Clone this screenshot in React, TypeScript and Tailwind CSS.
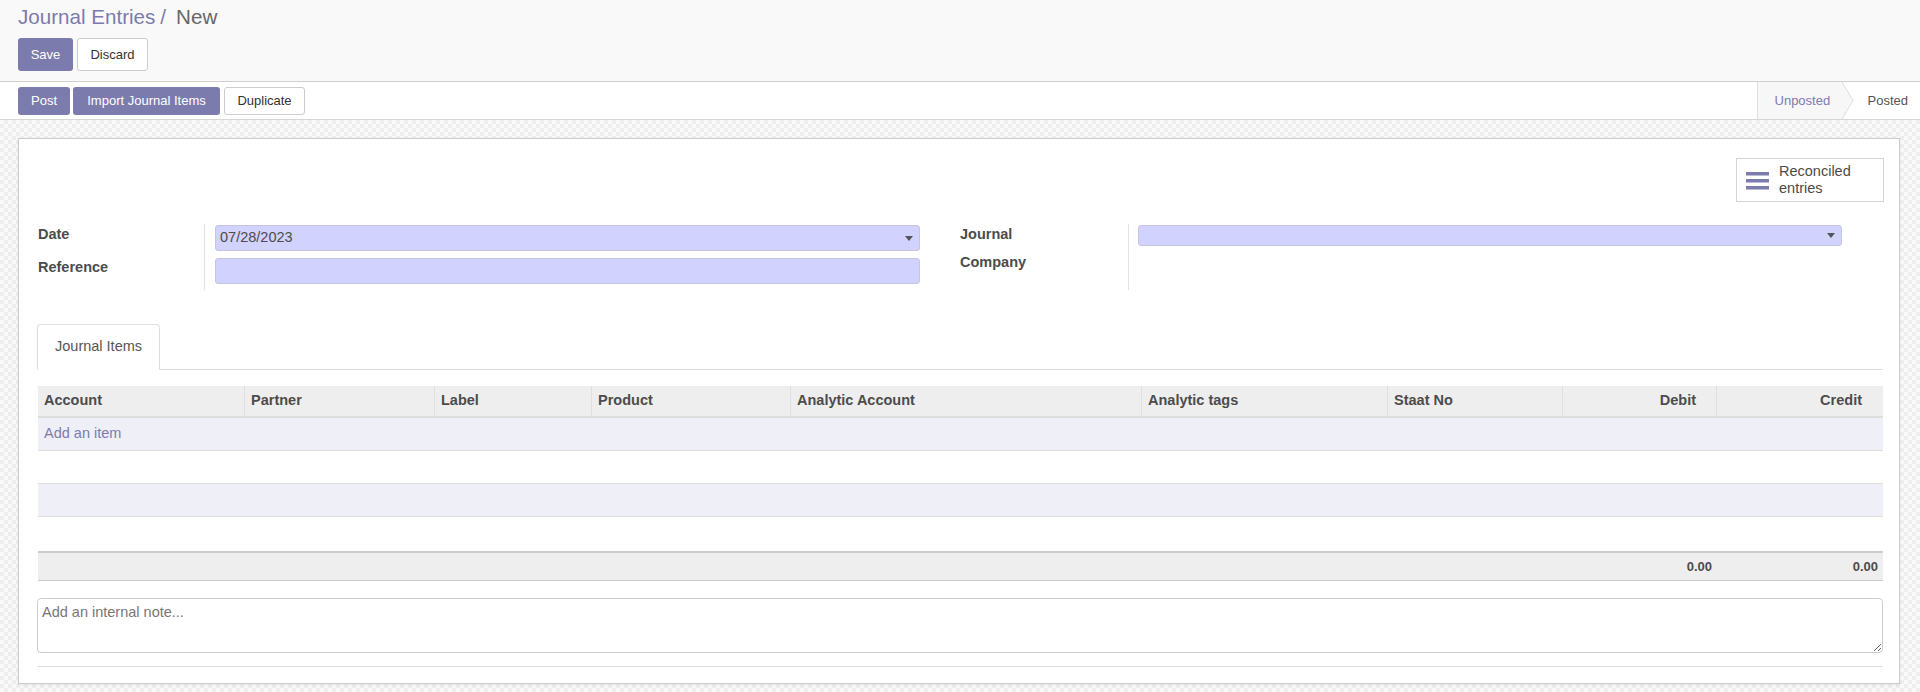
import React from "react";

const cols = [
  { name: "Account", right: false },
  { name: "Partner", right: false },
  { name: "Label", right: false },
  { name: "Product", right: false },
  { name: "Analytic Account", right: false },
  { name: "Analytic tags", right: false },
  { name: "Staat No", right: false },
  { name: "Debit", right: true },
  { name: "Credit", right: true },
];

const gridCols =
  "grid grid-cols-[206px_190px_157px_199px_351px_246px_175px_154px_166px]";

function Caret() {
  return (
    <svg width="8" height="5" viewBox="0 0 8 5" className="shrink-0">
      <path d="M0 0 L8 0 L4 5 Z" fill="#555" />
    </svg>
  );
}

export default function App() {
  return (
    <div className="w-[1920px] h-[692px] overflow-hidden font-['Liberation_Sans',Arial,sans-serif] text-[13px] text-[#4c4c4c] bg-white">
      {/* Control panel */}
      <div className="h-[82px] bg-[#f9f9f9] border-b border-[#cfcfcf] px-[18px] pt-[5px] box-border">
        <div className="text-[20.6px] leading-[24px] flex items-center">
          <span className="text-[#7c7bad]">Journal Entries</span>
          <span className="text-[#7c7bad] ml-[5px]">/</span>
          <span className="text-[#666666] ml-[10px]">New</span>
        </div>
        <div className="flex gap-[4px] mt-[9px]">
          <button className="h-[33px] w-[55px] rounded-[3px] bg-[#7c7bad] text-white text-[13px]">
            Save
          </button>
          <button className="h-[33px] w-[71px] rounded-[3px] bg-white border border-[#cccccc] text-[#333] text-[13px]">
            Discard
          </button>
        </div>
      </div>

      {/* Status bar */}
      <div className="h-[38px] bg-white border-b border-[#d6d6d6] flex items-stretch justify-between box-border">
        <div className="flex items-center gap-[3px] pl-[18px] pt-[1px]">
          <button className="h-[28px] w-[52px] rounded-[3px] bg-[#7c7bad] text-white text-[13px]">
            Post
          </button>
          <button className="h-[28px] w-[147px] rounded-[3px] bg-[#7c7bad] text-white text-[13px]">
            Import Journal Items
          </button>
          <button className="h-[28px] w-[81px] ml-[1px] rounded-[3px] bg-white border border-[#cccccc] text-[#333] text-[13px]">
            Duplicate
          </button>
        </div>
        <div className="flex items-stretch">
          <div className="relative flex items-center bg-[#f7f7f7] border-l border-[#dddddd] pl-[17px] pr-[12px] w-[85px] box-border">
            <span className="text-[#7c7bad] whitespace-nowrap">Unposted</span>
            <svg
              className="absolute top-0 left-[84px]"
              width="12"
              height="37"
              viewBox="0 0 12 37"
            >
              <path d="M0 0 L11 18.5 L0 37 Z" fill="#f7f7f7" />
              <path d="M0 0 L11 18.5 L0 37" fill="none" stroke="#dddddd" strokeWidth="1" />
            </svg>
          </div>
          <div className="flex items-center pl-[26px] pr-[12px]">
            <span className="text-[#555555]">Posted</span>
          </div>
        </div>
      </div>

      {/* Sheet background */}
      <div className="h-[572px] pt-[18px] pl-[18px] bg-[#f7f7f7] bg-[image:repeating-conic-gradient(#eeeeee_0%_25%,#f9f9f9_0%_50%)] bg-[length:8px_8px] box-border">
        <div className="w-[1882px] h-[546px] bg-white border border-[#cccccc] shadow-[0_1px_3px_rgba(0,0,0,0.08)] pl-[18px] pr-[16px] box-border text-[14.5px]">
          {/* stat button */}
          <div className="flex justify-end mt-[19px]">
            <div className="w-[148px] h-[44px] border border-[#d4d4d4] bg-white flex items-center pl-[9px] box-border -mr-[1px]">
              <svg width="24" height="20" viewBox="0 0 24 20" className="shrink-0">
                <rect x="0" y="2" width="23" height="3.5" fill="#7c7bad" />
                <rect x="0" y="9" width="23" height="3.5" fill="#7c7bad" />
                <rect x="0" y="16" width="23" height="3.5" fill="#7c7bad" />
              </svg>
              <div className="ml-[9px] text-[14.5px] leading-[17px] text-[#4c4c4c]">
                Reconciled
                <br />
                entries
              </div>
            </div>
          </div>

          {/* field groups */}
          <div className="flex mt-[22px]">
            <div className="w-[923px] flex">
              <div className="w-[167px] pt-[1px] flex flex-col gap-[7px] pl-[1px]">
                <div className="h-[26px] font-bold leading-[19px]">Date</div>
                <div className="h-[26px] font-bold leading-[19px]">Reference</div>
              </div>
              <div className="border-l border-[#e2e2e2] pl-[10px] pt-[1px] pb-[6px] flex flex-col gap-[7px]">
                <div className="w-[705px] h-[26px] rounded-[3px] bg-[#d2d2ff] border border-[#c5c5dd] flex items-center justify-between pl-[4px] pr-[6px] box-border">
                  <span className="text-[#4c4c4c]">07/28/2023</span>
                  <Caret />
                </div>
                <div className="w-[705px] h-[26px] rounded-[3px] bg-[#d2d2ff] border border-[#c5c5dd] box-border" />
              </div>
            </div>
            <div className="flex">
              <div className="w-[168px] pt-[1px] flex flex-col gap-[7px]">
                <div className="h-[21px] font-bold leading-[19px]">Journal</div>
                <div className="h-[21px] font-bold leading-[19px]">Company</div>
              </div>
              <div className="border-l border-[#e2e2e2] pl-[9px] pt-[1px] pb-[6px]">
                <div className="w-[704px] h-[21px] rounded-[3px] bg-[#d2d2ff] border border-[#c5c5dd] flex items-center justify-end pr-[6px] box-border">
                  <Caret />
                </div>
              </div>
            </div>
          </div>

          {/* tabs */}
          <div className="mt-[34px] h-[46px] border-b border-[#dddddd] flex box-border">
            <div className="h-[46px] px-[17px] flex items-center bg-white border border-[#dddddd] border-b-white rounded-t-[4px] text-[#555] box-border">
              Journal Items
            </div>
          </div>

          {/* table */}
          <div className="mt-[16px] ml-[1px] w-[1845px]">
            <div className={`${gridCols} h-[32px] bg-[#eeeeee] border-b-2 border-[#dddddd] box-border`}>
              {cols.map((c, i) => (
                <div
                  key={c.name}
                  className={`flex items-center font-bold text-[#4c4c4c] ${
                    i > 0 ? "border-l border-[#e0e0e0]" : ""
                  } ${c.right ? "justify-end pr-[20px]" : "pl-[6px]"}`}
                >
                  {c.name}
                </div>
              ))}
            </div>
            <div className="h-[33px] bg-[#efeff7] border-b border-[#dddddd] flex items-center pl-[6px] box-border">
              <span className="text-[#7c7bad]">Add an item</span>
            </div>
            <div className="h-[33px] bg-white border-b border-[#dddddd] box-border" />
            <div className="h-[33px] bg-[#efeff7] border-b border-[#dddddd] box-border" />
            <div className="h-[34px] bg-white box-border" />
            <div className={`${gridCols} h-[30px] bg-[#eeeeee] border-t-2 border-b border-[#cccccc] box-border`}>
              {cols.map((c, i) => (
                <div
                  key={c.name}
                  className="flex items-center justify-end pr-[4px] font-bold text-[13px] text-[#4c4c4c]"
                >
                  {i === 7 || i === 8 ? "0.00" : ""}
                </div>
              ))}
            </div>
          </div>

          {/* note */}
          <textarea
            placeholder="Add an internal note..."
            className="mt-[17px] block w-[1846px] h-[55px] border border-[#cccccc] rounded-[4px] px-[4px] py-[4px] leading-[19px] text-[14.5px] placeholder:text-[#777777] outline-none box-border"
          />
          <div className="mt-[13px] border-t border-[#dddddd] w-[1846px]" />
        </div>
      </div>
    </div>
  );
}
